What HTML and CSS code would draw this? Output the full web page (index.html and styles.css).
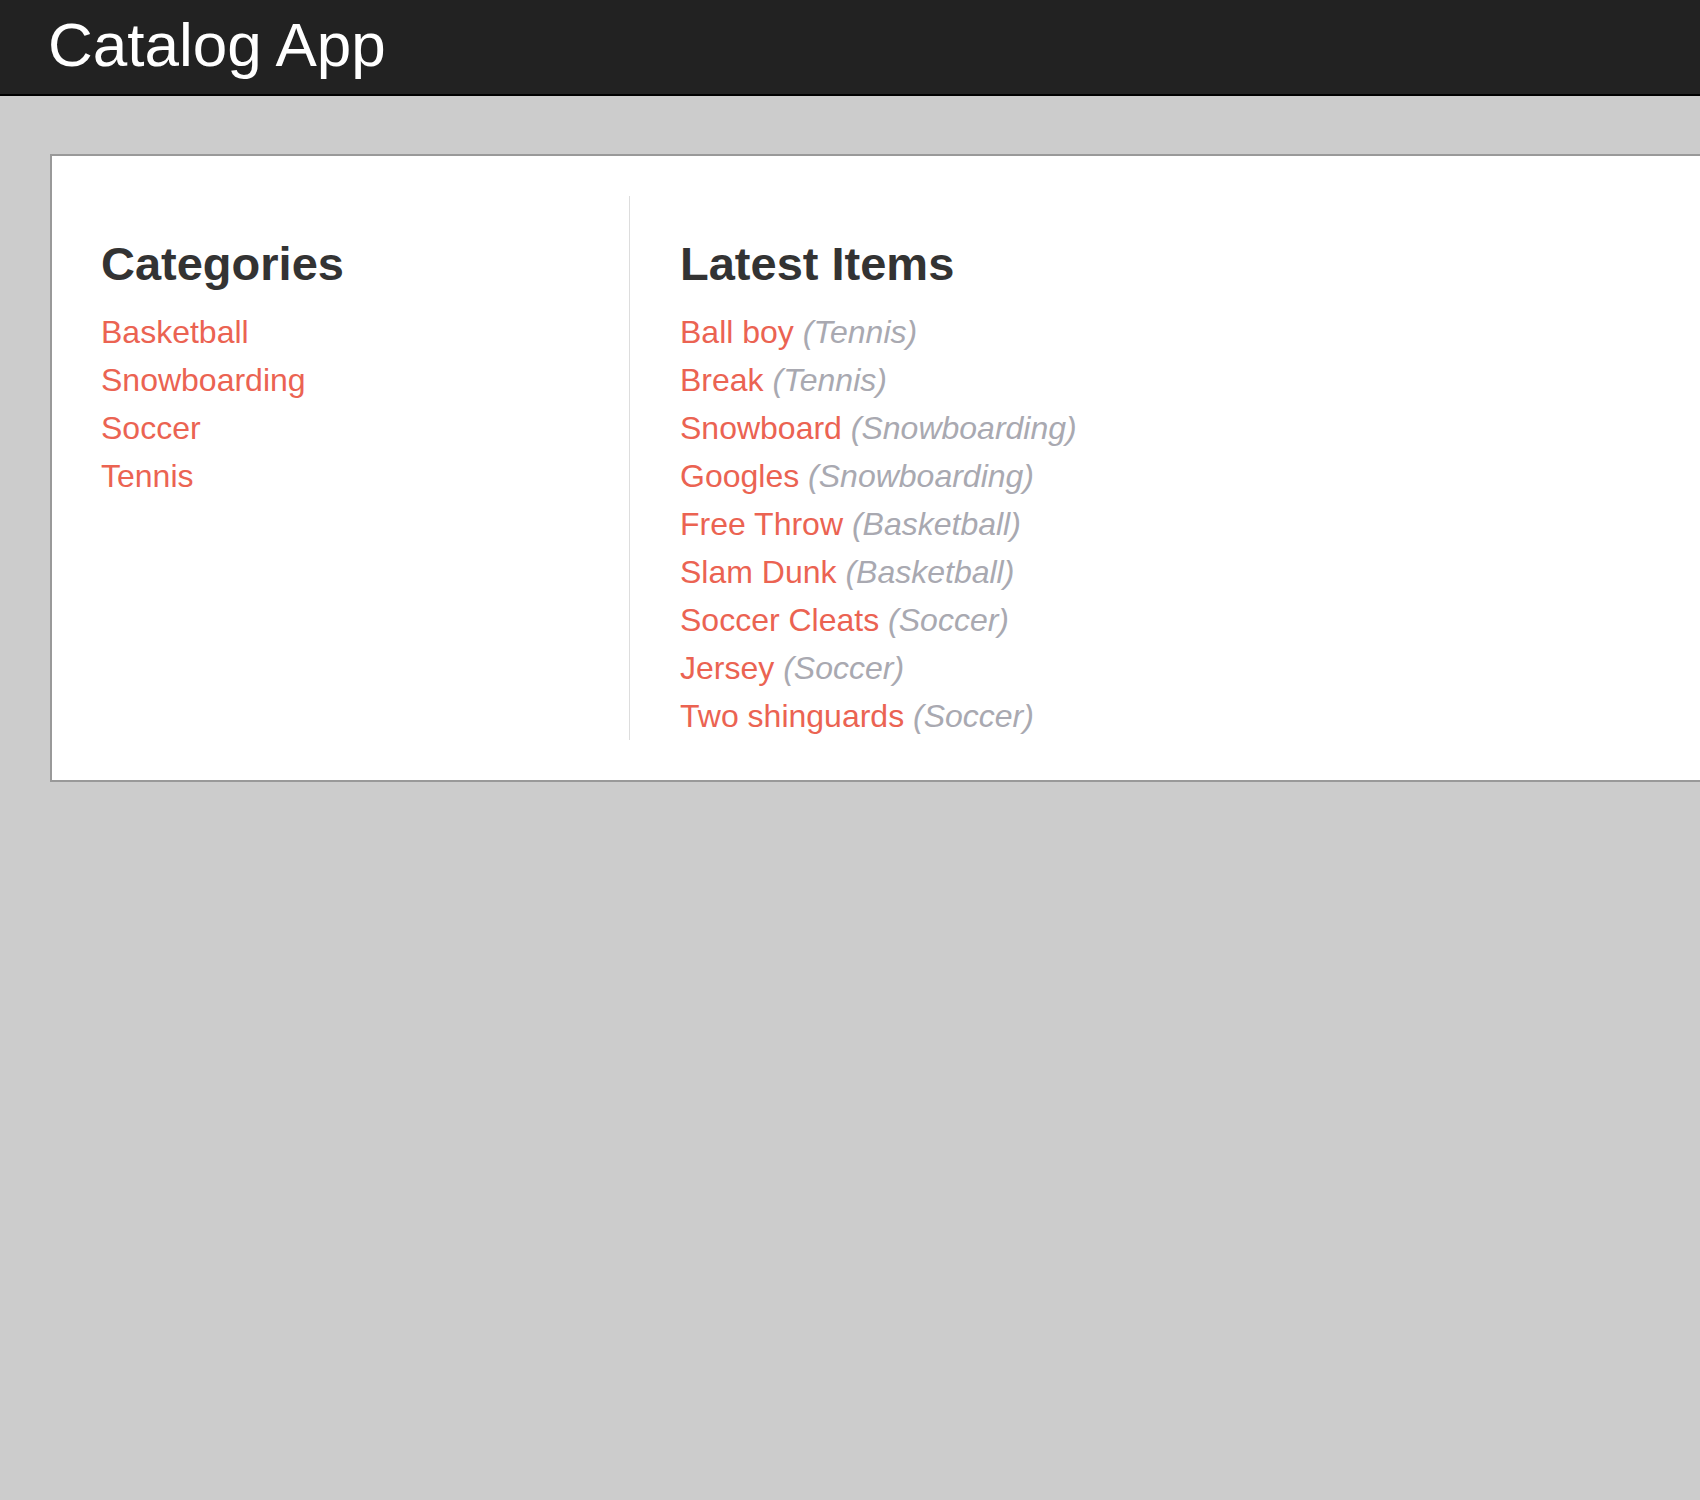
FILE: index.html
```html
<!DOCTYPE html>
<html lang="en">
<head>
<meta charset="utf-8">
<title>Catalog App</title>
<link rel="stylesheet" href="styles.css">
</head>
<body>
<header class="topbar">
  <h1 class="brand">Catalog App</h1>
</header>
<main class="card">
  <section class="col col-categories">
    <h2 class="col-title">Categories</h2>
    <ul class="list">
      <li><a class="link" href="#">Basketball</a></li>
      <li><a class="link" href="#">Snowboarding</a></li>
      <li><a class="link" href="#">Soccer</a></li>
      <li><a class="link" href="#">Tennis</a></li>
    </ul>
  </section>
  <section class="col col-items">
    <h2 class="col-title">Latest Items</h2>
    <ul class="list">
      <li><a class="link" href="#">Ball boy</a> <span class="cat">(Tennis)</span></li>
      <li><a class="link" href="#">Break</a> <span class="cat">(Tennis)</span></li>
      <li><a class="link" href="#">Snowboard</a> <span class="cat">(Snowboarding)</span></li>
      <li><a class="link" href="#">Googles</a> <span class="cat">(Snowboarding)</span></li>
      <li><a class="link" href="#">Free Throw</a> <span class="cat">(Basketball)</span></li>
      <li><a class="link" href="#">Slam Dunk</a> <span class="cat">(Basketball)</span></li>
      <li><a class="link" href="#">Soccer Cleats</a> <span class="cat">(Soccer)</span></li>
      <li><a class="link" href="#">Jersey</a> <span class="cat">(Soccer)</span></li>
      <li><a class="link" href="#">Two shinguards</a> <span class="cat">(Soccer)</span></li>
    </ul>
  </section>
</main>
</body>
</html>
```
FILE: styles.css
```css
html, body {
  margin: 0;
  padding: 0;
}
body {
  background: #cccccc;
  font-family: "Liberation Sans", Arial, Helvetica, sans-serif;
  overflow-x: hidden;
  min-height: 1500px;
}
.topbar {
  background: #222222;
  border-bottom: 2px solid #000000;
  height: 96px;
  box-sizing: border-box;
  padding: 15px 0 0 48px;
}
.brand {
  margin: 0;
  color: #ffffff;
  font-size: 62px;
  line-height: 60px;
  font-weight: normal;
}
.card {
  display: flex;
  margin: 58px 0 0 50px;
  background: #ffffff;
  border: 2px solid #999999;
  border-right: none;
  padding: 40px 0;
}
.col-categories {
  width: 528px;
  padding-left: 49px;
}
.col-items {
  flex: 1;
  border-left: 1px solid #dddddd;
  padding-left: 50px;
}
.col-title {
  margin: 41px 0 17px;
  font-size: 47px;
  line-height: 54px;
  font-weight: bold;
  color: #333333;
}
.list {
  list-style: none;
  margin: 0;
  padding: 0;
}
.list li {
  font-size: 32px;
  line-height: 48px;
}
.link {
  color: #eb6352;
  text-decoration: none;
}
.cat {
  color: #a9a9b1;
  font-style: italic;
}
```
